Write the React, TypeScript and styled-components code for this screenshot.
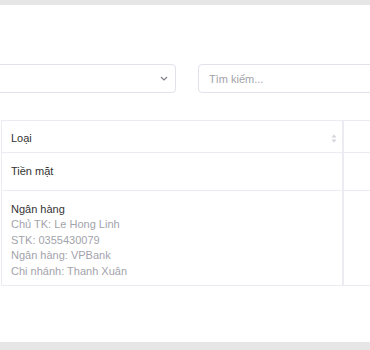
import React from 'react';
import styled, {createGlobalStyle} from 'styled-components';

const GlobalStyle = createGlobalStyle`
  html, body {
    margin: 0;
    padding: 0;
    background: #fff;
    overflow: hidden;
  }
  body {
    font-family: "Liberation Sans", Arial, sans-serif;
    color: #333;
  }
`;

const Page = styled.div`
  width: 370px;
  height: 350px;
  display: flex;
  flex-direction: column;
  overflow: hidden;
`;

const GreyBar = styled.div<{h: number}>`
  height: ${props => props.h}px;
  background: #e6e6e6;
  flex-shrink: 0;
`;

const Content = styled.div`
  flex: 1;
  background: #fff;
  padding: 59px 0 0 1px;
  overflow: hidden;
`;

const Filters = styled.div`
  display: flex;
  gap: 22px;
  margin-left: -21px;
  width: 460px;
`;

const SelectBox = styled.div`
  width: 196px;
  height: 29px;
  box-sizing: border-box;
  border: 1px solid #e2e2ea;
  border-radius: 4px;
  display: flex;
  align-items: center;
  justify-content: flex-end;
  padding-right: 7px;
  color: #8a8a95;
`;

const SearchBox = styled.input`
  flex: 1;
  height: 29px;
  box-sizing: border-box;
  border: 1px solid #e2e2ea;
  border-radius: 4px;
  padding: 0 10px;
  font-family: "Liberation Sans", Arial, sans-serif;
  font-size: 11px;
  color: #333;
  outline: none;
  &::placeholder {
    color: #a2a2aa;
  }
`;

const Table = styled.table`
  margin-top: 27px;
  border-collapse: separate;
  border-spacing: 0;
  width: 420px;
  table-layout: fixed;
  font-size: 11px;
  line-height: 15.4px;
`;

const Cell = styled.td<{h: number; last?: boolean}>`
  height: ${props => props.h}px;
  box-sizing: border-box;
  vertical-align: top;
  padding: 11px 9px 0;
  border-bottom: 1px solid #ebebf1;
  border-left: 1px solid #ebebf1;
  border-right: ${props => (props.last ? 'none' : '1px solid #ebebf1')};
`;

const HeadCell = styled(Cell).attrs({as: 'th'})`
  border-top: 1px solid #ebebf1;
  padding: 10px 5px 0 9px;
  font-weight: normal;
  text-align: left;
  color: #333;
`;

const HeadInner = styled.div`
  display: flex;
  align-items: center;
  justify-content: space-between;
`;

const Main = styled.div`
  color: #333;
`;

const Sub = styled.div`
  color: #a3a3ab;
`;

const Chevron = () => (
  <svg width="8" height="5" viewBox="0 0 8 5">
    <path d="M1 1l3 3 3-3" fill="none" stroke="#7d7d88" strokeWidth="1.1" />
  </svg>
);

const SortIcon = () => (
  <svg width="6" height="9" viewBox="0 0 6 9">
    <path d="M3 0.5L5.5 3.5H0.5z" fill="#d2d2d8" />
    <path d="M3 8.5L5.5 5.5H0.5z" fill="#d2d2d8" />
  </svg>
);

const bank = [
  'Chủ TK: Le Hong Linh',
  'STK: 0355430079',
  'Ngân hàng: VPBank',
  'Chi nhánh: Thanh Xuân',
];

export default function App() {
  return (
    <>
      <GlobalStyle />
      <Page>
        <GreyBar h={5} />
        <Content>
          <Filters>
            <SelectBox>
              <Chevron />
            </SelectBox>
            <SearchBox placeholder="Tìm kiếm..." />
          </Filters>
          <Table>
            <colgroup>
              <col style={{width: 342}} />
              <col />
            </colgroup>
            <thead>
              <tr>
                <HeadCell h={33}>
                  <HeadInner>
                    Loại
                    <SortIcon />
                  </HeadInner>
                </HeadCell>
                <HeadCell h={33} last />
              </tr>
            </thead>
            <tbody>
              <tr>
                <Cell h={38}>
                  <Main>Tiền mặt</Main>
                </Cell>
                <Cell h={38} last />
              </tr>
              <tr>
                <Cell h={95}>
                  <Main>Ngân hàng</Main>
                  {bank.map(line => (
                    <Sub key={line}>{line}</Sub>
                  ))}
                </Cell>
                <Cell h={95} last />
              </tr>
            </tbody>
          </Table>
        </Content>
        <GreyBar h={8} />
      </Page>
    </>
  );
}
